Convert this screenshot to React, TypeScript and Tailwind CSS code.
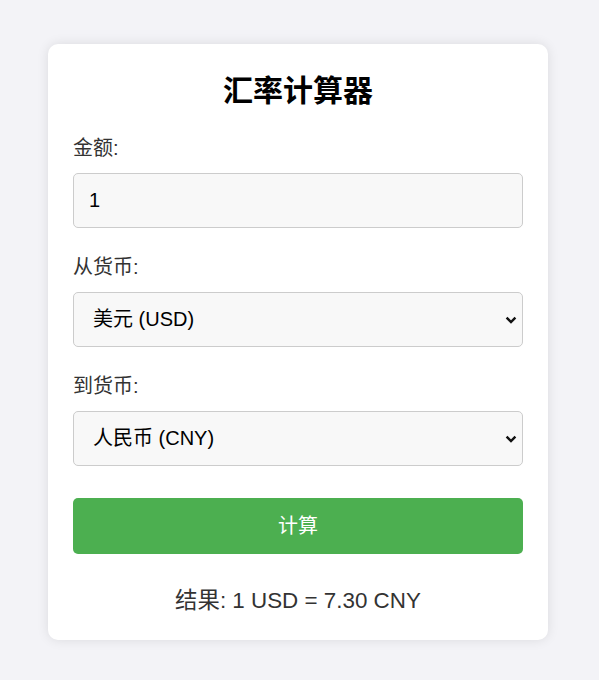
import React, { useState } from "react";

const RATES: Record<string, number> = {
  USD: 1,
  CNY: 7.3,
  EUR: 0.92,
  JPY: 150,
  GBP: 0.79,
};

const CURRENCIES = [
  { code: "USD", name: "美元" },
  { code: "CNY", name: "人民币" },
  { code: "EUR", name: "欧元" },
  { code: "JPY", name: "日元" },
  { code: "GBP", name: "英镑" },
];

const font = "font-['Liberation_Sans','Noto_Sans_CJK_SC',sans-serif]";

function Chevron() {
  return (
    <svg
      className="pointer-events-none absolute right-[6px] top-1/2 -translate-y-1/2"
      width="12"
      height="8"
      viewBox="0 0 12 8"
      fill="none"
    >
      <path d="M1.6 1.6 L6 6 L10.4 1.6" stroke="#111" strokeWidth="2.4" />
    </svg>
  );
}

function CurrencySelect({ value, onChange }: { value: string; onChange: (v: string) => void }) {
  return (
    <div className="relative">
      <select
        value={value}
        onChange={(e) => onChange(e.target.value)}
        className={`block h-[55px] w-full appearance-none rounded-[5px] border border-[#cccccc] bg-[#f8f8f8] pl-[19px] pr-8 text-[20px] leading-[23px] text-black outline-none ${font}`}
      >
        {CURRENCIES.map((c) => (
          <option key={c.code} value={c.code}>
            {c.name} ({c.code})
          </option>
        ))}
      </select>
      <Chevron />
    </div>
  );
}

export default function App() {
  const [amount, setAmount] = useState("1");
  const [from, setFrom] = useState("USD");
  const [to, setTo] = useState("CNY");
  const [result, setResult] = useState("1 USD = 7.30 CNY");

  const calculate = () => {
    const value = parseFloat(amount) || 0;
    const converted = (value / RATES[from]) * RATES[to];
    setResult(`${value} ${from} = ${converted.toFixed(2)} ${to}`);
  };

  return (
    <div className={`min-h-[680px] bg-[#f3f3f7] pt-[44px] ${font}`}>
      <div className="ml-[48px] w-[500px] rounded-[10px] bg-white px-[25px] pt-[29px] pb-[24px] shadow-[0_0_12px_rgba(0,0,0,0.1)]">
        <h1 className="text-center text-[30px] font-bold leading-[36px] text-black">汇率计算器</h1>

        <div className="mt-[27px]">
          <label className="mb-[13px] block text-[20px] leading-[24px] text-[#333333]">金额:</label>
          <input
            type="number"
            value={amount}
            onChange={(e) => setAmount(e.target.value)}
            className={`block h-[55px] w-full rounded-[5px] border border-[#cccccc] bg-[#f8f8f8] px-[15px] text-[20px] leading-[23px] text-black outline-none ${font}`}
          />
        </div>

        <div className="mt-[27px]">
          <label className="mb-[13px] block text-[20px] leading-[24px] text-[#333333]">从货币:</label>
          <CurrencySelect value={from} onChange={setFrom} />
        </div>

        <div className="mt-[27px]">
          <label className="mb-[13px] block text-[20px] leading-[24px] text-[#333333]">到货币:</label>
          <CurrencySelect value={to} onChange={setTo} />
        </div>

        <button
          onClick={calculate}
          className="mt-[32px] block h-[56px] w-full rounded-[5px] bg-[#4caf50] text-[20px] leading-[24px] text-white"
        >
          计算
        </button>

        <div className="mt-[32px] text-center text-[22.4px] leading-[30px] text-[#333333]">结果: {result}</div>
      </div>
    </div>
  );
}
